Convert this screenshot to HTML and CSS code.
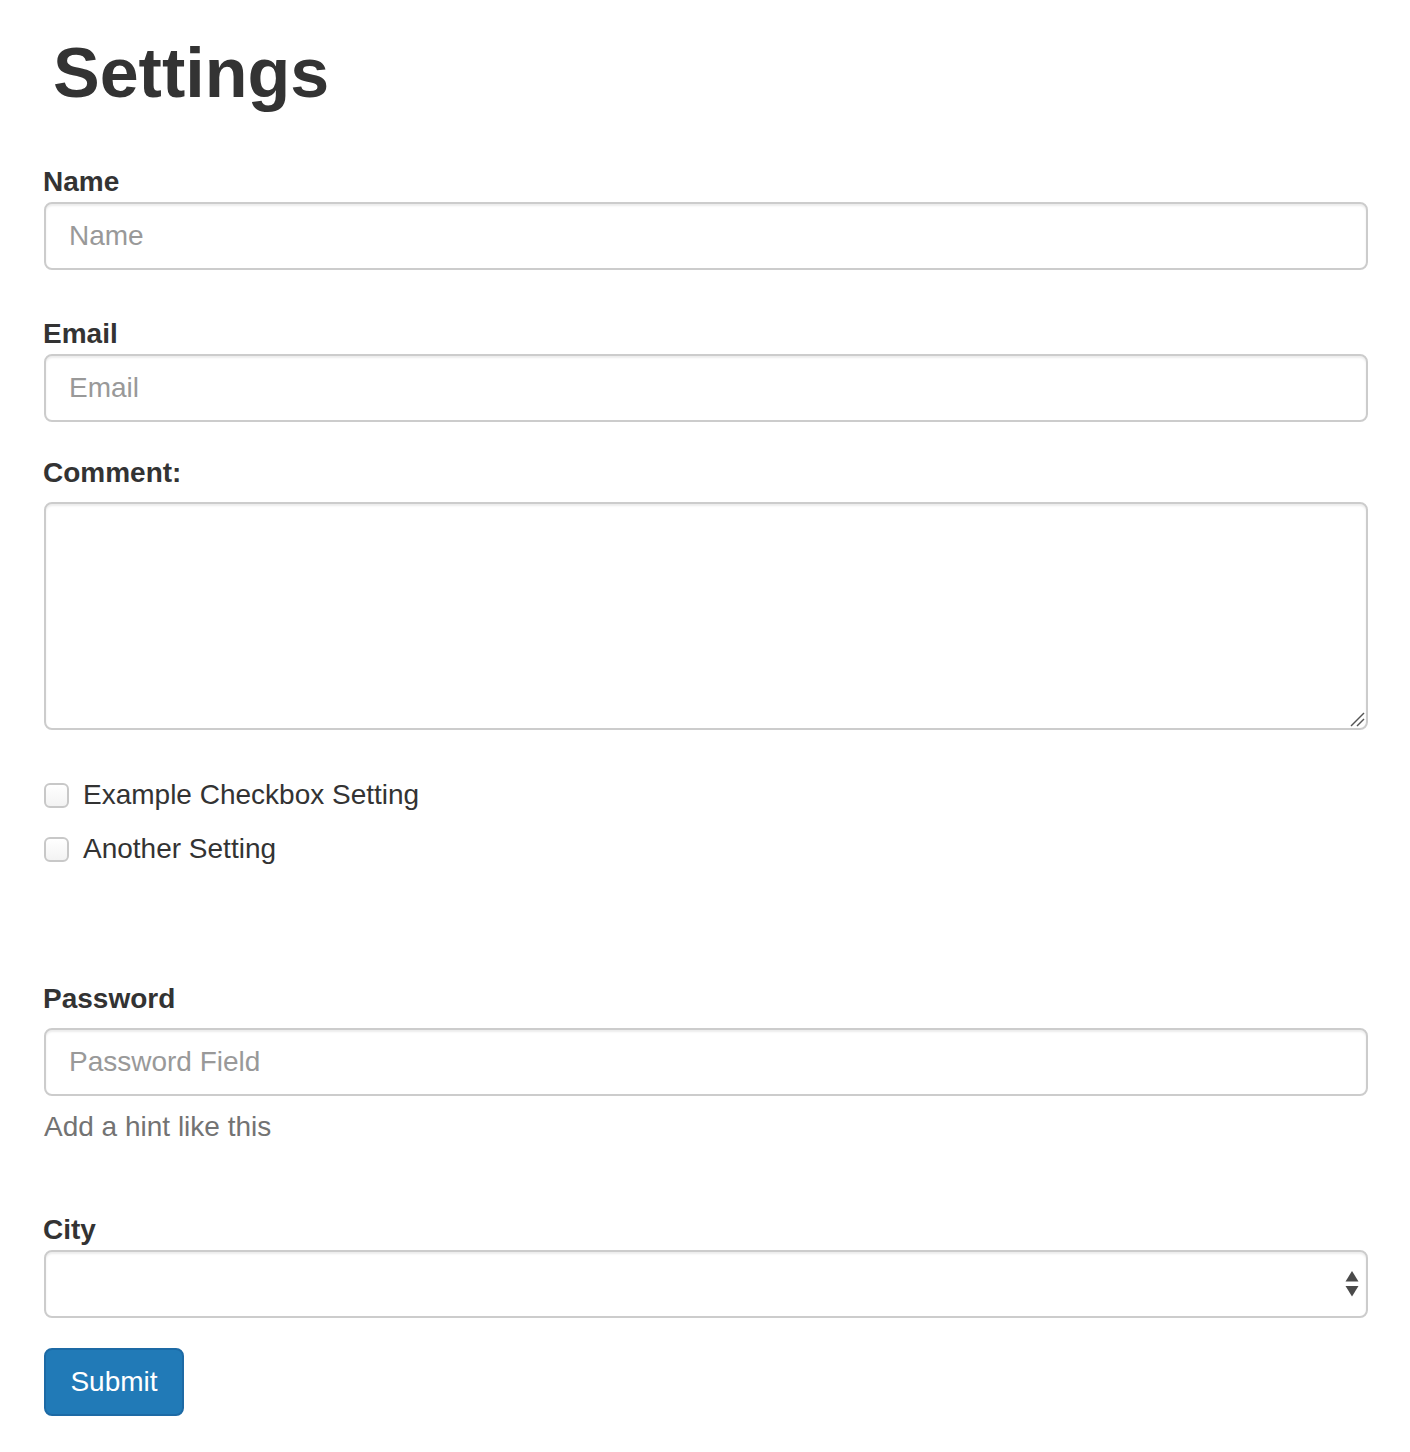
FILE: index.html
```html
<!DOCTYPE html>
<html lang="en">
<head>
<meta charset="utf-8">
<title>Settings</title>
<link rel="stylesheet" href="styles.css">
</head>
<body>
<div class="page">
  <h1 class="title">Settings</h1>
  <form class="form">
    <div class="group group-name">
      <label class="label" for="name">Name</label>
      <input class="control" id="name" type="text" placeholder="Name">
    </div>
    <div class="group group-email">
      <label class="label" for="email">Email</label>
      <input class="control" id="email" type="email" placeholder="Email">
    </div>
    <div class="group group-comment">
      <label class="label label-loose" for="comment">Comment:</label>
      <div class="textarea-wrap">
        <textarea class="control textarea" id="comment"></textarea>
        <svg class="grip" width="18" height="18" viewBox="0 0 18 18" aria-hidden="true">
          <line x1="3" y1="16" x2="16" y2="3" stroke="#555" stroke-width="1.5"/>
          <line x1="9" y1="16" x2="16" y2="9" stroke="#555" stroke-width="1.5"/>
        </svg>
      </div>
    </div>
    <div class="checks">
      <label class="check"><input class="box" type="checkbox"><span>Example Checkbox Setting</span></label>
      <label class="check"><input class="box" type="checkbox"><span>Another Setting</span></label>
    </div>
    <div class="group group-password">
      <label class="label label-loose" for="password">Password</label>
      <input class="control" id="password" type="password" placeholder="Password Field">
      <p class="hint">Add a hint like this</p>
    </div>
    <div class="group group-city">
      <label class="label" for="city">City</label>
      <div class="select-wrap">
        <select class="control select" id="city"><option></option></select>
        <svg class="arrows" width="14" height="26" viewBox="0 0 14 26" aria-hidden="true">
          <path d="M7 0 L13.5 10.5 L0.5 10.5 Z" fill="#4a4a4a"/>
          <path d="M0.5 15 L13.5 15 L7 25.5 Z" fill="#4a4a4a"/>
        </svg>
      </div>
    </div>
    <button class="submit" type="button">Submit</button>
  </form>
</div>
</body>
</html>
```
FILE: styles.css
```css
* { box-sizing: border-box; }
html, body {
  margin: 0;
  padding: 0;
  background: #fff;
}
body {
  font-family: "Liberation Sans", Arial, Helvetica, sans-serif;
  color: #333;
  font-size: 28px;
  line-height: 40px;
}
.page {
  width: 1410px;
  padding: 33px 42px 36px 44px;
}
.title {
  margin: 0 0 0 9px;
  font-size: 70px;
  line-height: 80px;
  font-weight: 700;
  color: #333;
}
.form {
  display: flex;
  flex-direction: column;
}
.group {
  display: flex;
  flex-direction: column;
}
.group-name { margin-top: 49px; }
.group-email { margin-top: 44px; }
.group-comment { margin-top: 31px; }
.group-password { margin-top: 110px; }
.group-city { margin-top: 63px; }
.label {
  display: block;
  font-weight: 700;
  font-size: 28px;
  line-height: 40px;
  margin-left: -1px;
}
.label-loose { margin-bottom: 9px; }
.control {
  display: block;
  width: 100%;
  height: 68px;
  padding: 12px 23px;
  font-family: inherit;
  font-size: 28px;
  color: #555;
  background: #fff;
  border: 2px solid #ccc;
  border-radius: 8px;
  box-shadow: inset 0 2px 2px rgba(0,0,0,0.075);
  outline: none;
}
.control::placeholder { color: #999; }
.textarea-wrap { position: relative; }
.textarea {
  height: 228px;
  resize: none;
}
.grip {
  position: absolute;
  right: 2px;
  bottom: 2px;
}
.checks {
  margin-top: 45px;
  display: flex;
  flex-direction: column;
  gap: 14px;
}
.check {
  display: flex;
  align-items: center;
  gap: 14px;
  font-size: 28px;
  line-height: 40px;
  color: #333;
}
.box {
  appearance: none;
  -webkit-appearance: none;
  margin: 0;
  width: 25px;
  height: 25px;
  border: 2px solid #c8c8c8;
  border-radius: 6px;
  background: linear-gradient(#fff, #f3f3f3);
  flex: none;
}
.hint {
  margin: 11px 0 0 0;
  color: #737373;
  font-size: 28px;
  line-height: 40px;
}
.select-wrap { position: relative; }
.select {
  appearance: none;
  -webkit-appearance: none;
}
.arrows {
  position: absolute;
  right: 9px;
  top: 21px;
}
.submit {
  align-self: flex-start;
  margin-top: 30px;
  width: 140px;
  height: 68px;
  padding: 0;
  font-family: inherit;
  font-size: 28px;
  color: #fff;
  background: #217ab7;
  border: 2px solid #1d6aa5;
  border-radius: 8px;
}
```
